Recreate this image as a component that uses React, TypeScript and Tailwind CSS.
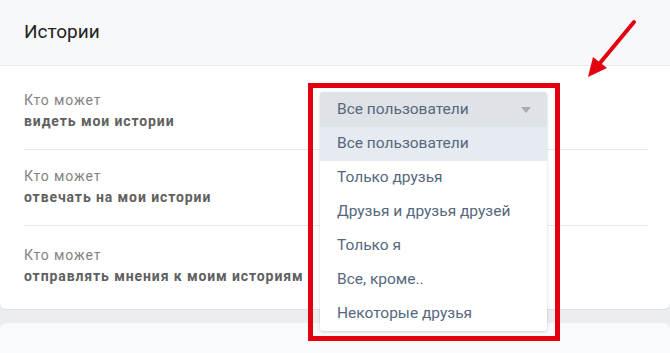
const rows = [
  { top: "Кто может", bold: "видеть мои истории", cls: "pt-[24px] pb-[17px] border-b" },
  { top: "Кто может", bold: "отвечать на мои истории", cls: "pt-[16px] pb-[17px] border-b" },
  { top: "Кто может", bold: "отправлять мнения к моим историям", cls: "pt-[19px] pb-[22px]" },
];

const options = [
  "Все пользователи",
  "Только друзья",
  "Друзья и друзья друзей",
  "Только я",
  "Все, кроме..",
  "Некоторые друзья",
];

const App = () => {
  return (
    <div className="relative w-[670px] h-[353px] overflow-hidden bg-[#ebedf0] font-['Roboto',sans-serif]">
      <div className="bg-white rounded-b-[6px] shadow-[0_1px_0_#dce1e6]">
        <div className="h-[66px] bg-[#f7f8fa] border-b border-[#e7e8ec] px-6 flex items-center">
          <h2 className="text-[19px] text-[#222]">Истории</h2>
        </div>
        <div className="pl-6 pr-[22px]">
          {rows.map((r) => (
            <div key={r.bold} className={`${r.cls} border-[#e7e8ec] text-[14px] leading-[21px] tracking-[0.9px]`}>
              <div className="text-[#838383]">{r.top}</div>
              <div className="font-bold text-[#606060]">{r.bold}</div>
            </div>
          ))}
        </div>
      </div>
      <div className="mt-[14px] h-[40px] bg-[#f9fafb] rounded-t-[6px]" />

      {/* dropdown */}
      <div className="absolute left-[320px] top-[92px] w-[227px] bg-white rounded-[3px] shadow-[0_1px_3px_rgba(0,0,0,0.18)] text-[15.5px] text-[#55677d]">
        <div className="h-[35px] bg-[#dfe3e7] flex items-center justify-between pl-[17px] pr-[16px] rounded-t-[3px]">
          <span>Все пользователи</span>
          <svg width="10" height="6" viewBox="0 0 10 6">
            <path d="M0 0h10L5 6z" fill="#a3abb5" />
          </svg>
        </div>
        {options.map((o, i) => (
          <div
            key={o}
            className={`h-[34px] flex items-center pl-[17px] ${i === 0 ? "bg-[#e5ebf1]" : ""}`}
          >
            {o}
          </div>
        ))}
      </div>

      {/* red highlight */}
      <div className="absolute left-[308px] top-[83px] w-[252px] h-[258px] border-[5px] border-[#e3000f]" />

      <svg className="absolute left-0 top-0" width="670" height="353">
        <line x1="634" y1="22" x2="600" y2="63" stroke="#e3000f" strokeWidth="4" strokeLinecap="round" />
        <path d="M588 77 L593 57 L607 68 Z" fill="#e3000f" />
      </svg>
    </div>
  );
};

export default App;
